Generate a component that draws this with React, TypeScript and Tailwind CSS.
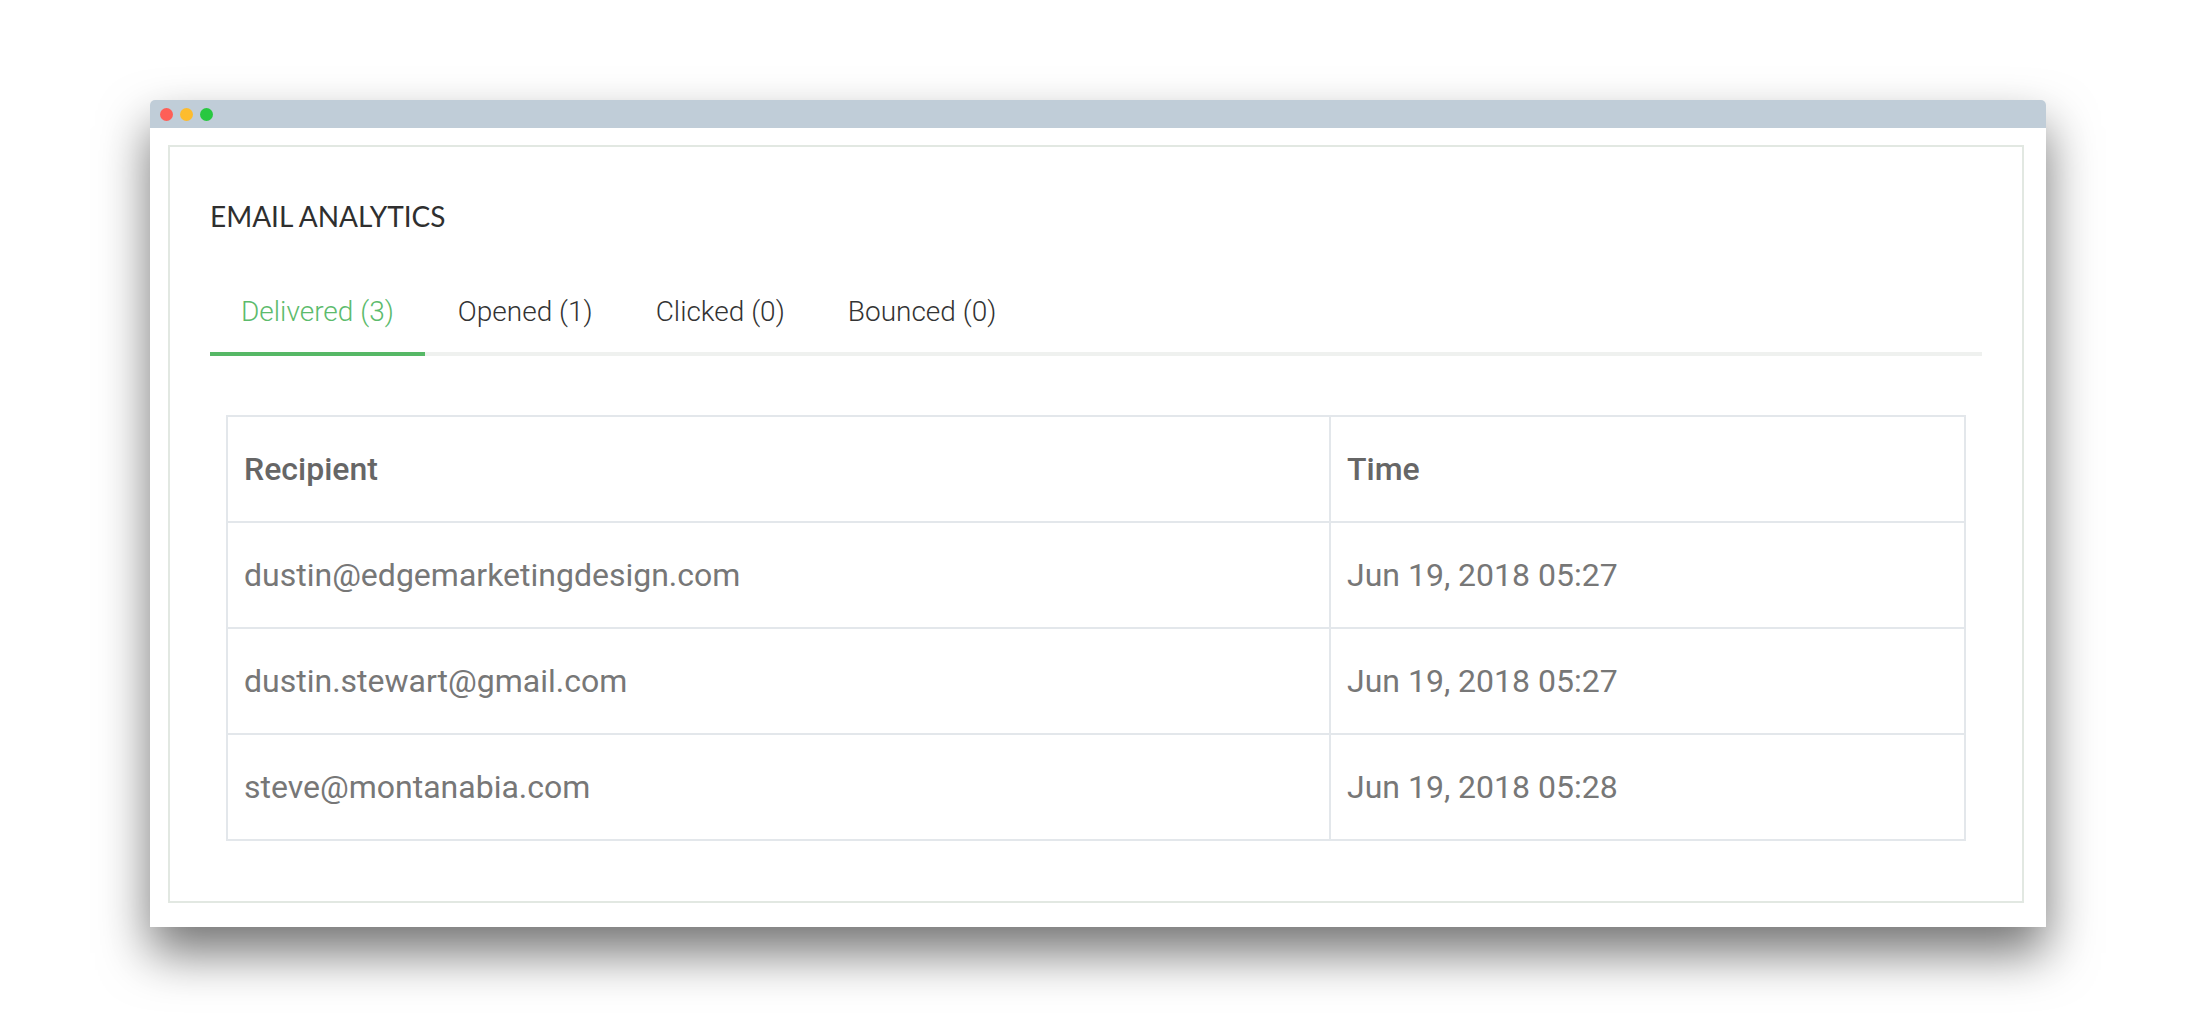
const tabs = [
  { label: "Delivered (3)", active: true },
  { label: "Opened (1)", active: false },
  { label: "Clicked (0)", active: false },
  { label: "Bounced (0)", active: false },
];

const rows = [
  { email: "dustin@edgemarketingdesign.com", time: "Jun 19, 2018 05:27" },
  { email: "dustin.stewart@gmail.com", time: "Jun 19, 2018 05:27" },
  { email: "steve@montanabia.com", time: "Jun 19, 2018 05:28" },
];

export default function App() {
  return (
    <div className="min-h-screen bg-white pt-[100px] pl-[150px]">
      <div className="w-[1896px] h-[827px] flex flex-col bg-white rounded-t-[5px] shadow-[0_26px_50px_rgba(0,0,0,0.55)]">
        {/* title bar */}
        <div className="h-[28px] flex items-center gap-[7px] pl-[10px] bg-[#c0cdd8] rounded-t-[5px]">
          <span className="w-[13px] h-[13px] rounded-full bg-[#fe5f57]" />
          <span className="w-[13px] h-[13px] rounded-full bg-[#fdbc2e]" />
          <span className="w-[13px] h-[13px] rounded-full bg-[#28c840]" />
        </div>

        <div className="flex-1 pt-[17px] pl-[18px] pr-[22px] pb-[24px]">
          <div className="h-full border-2 border-[#e2e8e2] p-10">
            <h1 className="mt-3 text-[28px] leading-[34px] text-[#2f2f2f] font-['Lato',sans-serif]">
              EMAIL ANALYTICS
            </h1>

            <div className="mt-[62px] flex border-b-4 border-[#eff1ef] font-['Roboto',sans-serif]">
              {tabs.map((tab) => (
                <div
                  key={tab.label}
                  className={
                    tab.active
                      ? "-mb-1 pl-[31px] pr-[31px] pb-[23px] text-[28px] leading-[34px] font-light text-[#5cbb6c] border-b-4 border-[#56b866]"
                      : "-mb-1 pl-[33px] pr-[30px] pb-[23px] text-[28px] leading-[34px] font-light text-[#333] border-b-4 border-transparent"
                  }
                >
                  {tab.label}
                </div>
              ))}
            </div>

            <div className="mx-4 mt-[59px]">
              <table className="w-full border-collapse border-2 border-[#e3e7eb] font-['Roboto',sans-serif]">
                <thead>
                  <tr>
                    <th className="w-[1103px] h-[106px] border-2 border-[#e3e7eb] px-4 text-left text-[32px] font-medium text-[#666]">
                      Recipient
                    </th>
                    <th className="h-[106px] border-2 border-[#e3e7eb] px-4 text-left text-[32px] font-medium text-[#666]">
                      Time
                    </th>
                  </tr>
                </thead>
                <tbody>
                  {rows.map((row) => (
                    <tr key={row.email}>
                      <td className="h-[106px] border-2 border-[#e3e7eb] px-4 text-[32px] text-[#777]">
                        {row.email}
                      </td>
                      <td className="h-[106px] border-2 border-[#e3e7eb] px-4 text-[32px] text-[#777]">
                        {row.time}
                      </td>
                    </tr>
                  ))}
                </tbody>
              </table>
            </div>
          </div>
        </div>
      </div>
    </div>
  );
}
